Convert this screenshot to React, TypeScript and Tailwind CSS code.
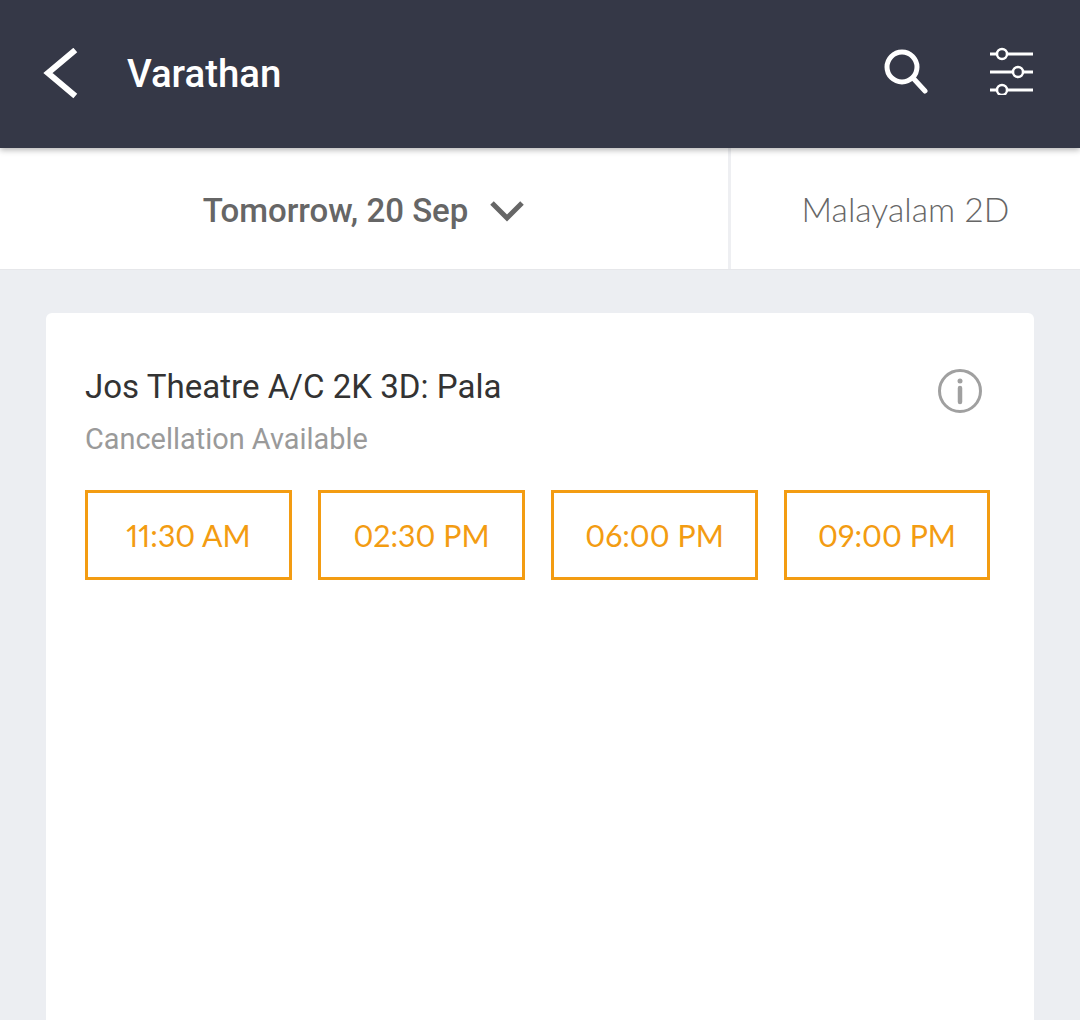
const showtimes = ["11:30 AM", "02:30 PM", "06:00 PM", "09:00 PM"]

export default function App() {
  return (
    <div className="h-[1020px] overflow-hidden bg-[#eceef2] font-['Roboto',sans-serif]">
      <header className="relative z-10 flex h-[148px] items-center bg-[#353847] pl-[42px] pr-[46px] shadow-[0_2px_6px_rgba(0,0,0,0.3)]">
        <svg width="36" height="52" viewBox="0 0 36 52" fill="none" className="mr-[49px] mb-[1px]">
          <path d="M31 4 L6 25 L31 46" stroke="#fff" strokeWidth="6" strokeLinecap="square" />
        </svg>
        <h1 className="text-[38.4px] font-medium leading-none text-white">Varathan</h1>
        <div className="ml-auto mb-[7px] flex items-center gap-[61px]">
          <svg width="46" height="46" viewBox="0 0 46 46" fill="none" stroke="#fff" strokeWidth="5">
            <circle cx="19" cy="19" r="15" />
            <path d="M30 30 L42 43" strokeLinecap="round" />
          </svg>
          <svg width="44" height="48" viewBox="0 0 44 48" fill="none" stroke="#fff" strokeWidth="3">
            <path d="M0 7 H7 M18 7 H43 M0 25 H23 M33 25 H43 M0 43 H7 M18 43 H43" />
            <circle cx="12" cy="7" r="5" strokeWidth="2.5" />
            <circle cx="28" cy="25" r="5" strokeWidth="2.5" />
            <circle cx="12" cy="43" r="5" strokeWidth="2.5" />
          </svg>
        </div>
      </header>

      <div className="flex h-[122px] border-b border-[#e6e7ea] bg-white">
        <div className="flex w-[728px] items-center justify-center gap-[21px] pt-[5px] text-[#666666]">
          <span className="text-[33px] font-medium">Tomorrow, 20 Sep</span>
          <svg width="36" height="22" viewBox="0 0 36 22" fill="none">
            <path d="M3 3 L18 18 L33 3" stroke="#666666" strokeWidth="5" />
          </svg>
        </div>
        <div className="flex flex-1 items-center justify-center border-l-[3px] border-[#eeeff2] pt-[1px] font-['Lato',sans-serif] text-[33.7px] font-light text-[#666666]">
          Malayalam 2D
        </div>
      </div>

      <main className="mx-[46px] mt-[43px] h-[800px] rounded-md bg-white pl-[39px] pr-[44px] pt-[52px]">
        <div className="flex justify-between pr-[8px]">
          <div>
            <h2 className="text-[33.1px] leading-[44px] text-[#333333]">Jos Theatre A/C 2K 3D: Pala</h2>
            <p className="mt-[13px] text-[28.9px] leading-[34px] text-[#9a9a9a]">Cancellation Available</p>
          </div>
          <svg width="44" height="44" viewBox="0 0 44 44" fill="none" className="mt-[4px]">
            <circle cx="22" cy="22" r="20.5" stroke="#a0a0a0" strokeWidth="3" />
            <circle cx="22" cy="12" r="2.5" fill="#a0a0a0" />
            <path d="M22 19 V33" stroke="#a0a0a0" strokeWidth="4.5" strokeLinecap="round" />
          </svg>
        </div>
        <div className="mt-[34px] flex gap-[26px]">
          {showtimes.map((time) => (
            <button
              key={time}
              className="flex h-[90px] w-[207px] items-center justify-center border-[3px] border-[#f39c12] pt-[2px] font-['Lato',sans-serif] text-[30.3px] text-[#f39c12] last:w-[206px] [font-variant-numeric:proportional-nums]"
            >
              {time}
            </button>
          ))}
        </div>
      </main>
    </div>
  )
}
